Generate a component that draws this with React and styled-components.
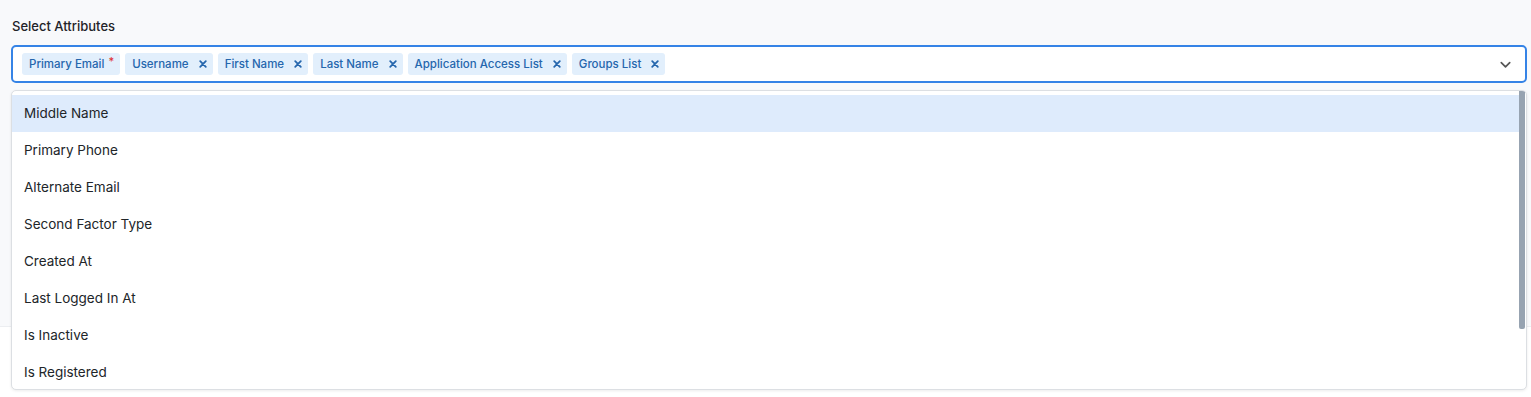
import React from 'react'
import styled, { createGlobalStyle } from 'styled-components'

const GlobalStyle = createGlobalStyle`
  html, body {
    margin: 0;
    padding: 0;
    background: #f8f9fb;
    font-family: Inter, "Noto Sans", sans-serif;
  }
`

const selected = [
  { name: 'Primary Email', required: true },
  { name: 'Username' },
  { name: 'First Name' },
  { name: 'Last Name' },
  { name: 'Application Access List' },
  { name: 'Groups List' },
]

const options = [
  'Middle Name',
  'Primary Phone',
  'Alternate Email',
  'Second Factor Type',
  'Created At',
  'Last Logged In At',
  'Is Inactive',
  'Is Registered',
]

const App = () => {
  return (
    <Page>
      <GlobalStyle />
      <Field>
        <Label>Select Attributes</Label>
        <Control>
          <Chips>
            {selected.map((item) => (
              <Chip key={item.name}>
                {item.name}
                {item.required ? (
                  <Required>*</Required>
                ) : (
                  <Remove>
                    <svg viewBox="0 0 10 10" width="8" height="8">
                      <path d="M1.5 1.5 L8.5 8.5 M8.5 1.5 L1.5 8.5" stroke="currentColor" strokeWidth="2.2" strokeLinecap="round" />
                    </svg>
                  </Remove>
                )}
              </Chip>
            ))}
          </Chips>
          <Chevron>
            <svg viewBox="0 0 16 16" width="15" height="15">
              <path d="M3.5 6 L8 10.5 L12.5 6" fill="none" stroke="#555" strokeWidth="1.8" strokeLinecap="round" strokeLinejoin="round" />
            </svg>
          </Chevron>
        </Control>
        <Menu>
          <List>
            {options.map((opt, i) => (
              <Option key={opt} active={i === 0}>{opt}</Option>
            ))}
          </List>
          <Track>
            <Thumb />
          </Track>
        </Menu>
      </Field>
      <Below />
    </Page>
  )
}

const Page = styled.div`
  width: 1531px;
  height: 397px;
  overflow: hidden;
  display: flex;
  flex-direction: column;
`

const Field = styled.div`
  position: relative;
  padding: 17px 4px 0 11px;
  height: 309px;
`

const Label = styled.div`
  font-size: 13px;
  font-weight: 500;
  color: #1f2328;
  padding-left: 1px;
  margin-bottom: 10px;
  line-height: 18px;
`

const Control = styled.div`
  height: 38px;
  box-sizing: border-box;
  background: #fff;
  border: 2px solid #3583e6;
  border-radius: 5px;
  display: flex;
  align-items: center;
  justify-content: space-between;
  padding: 0 12px 0 9px;
`

const Chips = styled.div`
  display: flex;
  gap: 5px;
`

const Chip = styled.div`
  height: 22px;
  display: flex;
  align-items: center;
  background: #e2effc;
  color: #2566ad;
  font-size: 11.5px;
  font-weight: 500;
  border-radius: 3px;
  padding: 0 6px 0 7px;
`

const Required = styled.span`
  color: #e03131;
  font-size: 11px;
  margin-left: 4px;
  position: relative;
  top: -3px;
`

const Remove = styled.span`
  display: flex;
  margin-left: 10px;
  color: #2566ad;
`

const Chevron = styled.div`
  display: flex;
`

const Menu = styled.div`
  position: absolute;
  left: 11px;
  top: 90px;
  width: 1516px;
  height: 300px;
  box-sizing: border-box;
  background: #fff;
  border: 1px solid #dcdfe3;
  border-radius: 5px;
  box-shadow: 0 1px 3px rgba(0, 0, 0, 0.08);
  display: flex;
  overflow: hidden;
`

const List = styled.div`
  flex: 1;
  padding-top: 4px;
`

const Option = styled.div`
  height: 37px;
  display: flex;
  align-items: center;
  padding: 0 0 1px 12px;
  box-sizing: border-box;
  font-size: 13.5px;
  color: #212529;
  background: ${(p) => (p.active ? '#deebfc' : 'transparent')};
`

const Track = styled.div`
  width: 6px;
  padding-right: 1px;
`

const Thumb = styled.div`
  height: 238px;
  background: #97a3b1;
  border-radius: 0 0 2px 2px;
`

const Below = styled.div`
  flex: 1;
  background: #fff;
  border-top: 1px solid #eceef1;
`

export default App
